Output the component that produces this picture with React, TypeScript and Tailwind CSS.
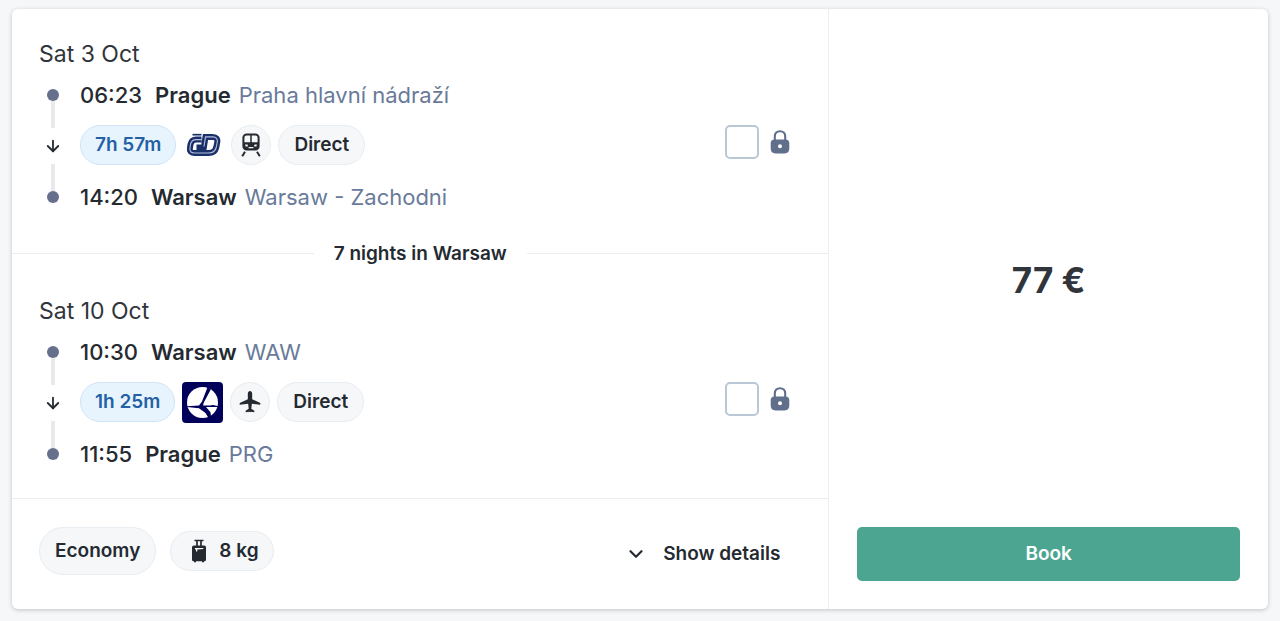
import React from 'react';
import { ArrowDown, ChevronDown } from 'lucide-react';

interface Stop {
  time: string;
  city: string;
  station: string;
}

interface Trip {
  id: string;
  date: string;
  from: Stop;
  to: Stop;
  duration: string;
  carrier: 'cd' | 'lot';
  transport: 'train' | 'plane';
}

const trips: Trip[] = [
  {
    id: 'outbound',
    date: 'Sat 3 Oct',
    from: { time: '06:23', city: 'Prague', station: 'Praha hlavní nádraží' },
    to: { time: '14:20', city: 'Warsaw', station: 'Warsaw - Zachodni' },
    duration: '7h 57m',
    carrier: 'cd',
    transport: 'train',
  },
  {
    id: 'inbound',
    date: 'Sat 10 Oct',
    from: { time: '10:30', city: 'Warsaw', station: 'WAW' },
    to: { time: '11:55', city: 'Prague', station: 'PRG' },
    duration: '1h 25m',
    carrier: 'lot',
    transport: 'plane',
  },
];

function CdLogo() {
  return (
    <svg width="41" height="26" viewBox="0 0 41 26" fill="none" aria-hidden="true">
      <path d="M9.5 2.7H18.5" stroke="#1b3068" strokeWidth="1.7" />
      <path
        d="M18.5 7.6H13C10 7.6 8.4 9 7.6 12L7 15.5C6.3 19.3 8 21 11.3 21H25.5C30 21 32.3 19.3 33.2 15.5L34.2 10.5C35 6.8 33.2 4.9 29.8 4.9H22.5L20.8 15.4H13.5"
        stroke="#1b3068"
        strokeWidth="6"
      />
      <path
        d="M18.5 7.6H13C10 7.6 8.4 9 7.6 12L7 15.5C6.3 19.3 8 21 11.3 21H25.5C30 21 32.3 19.3 33.2 15.5L34.2 10.5C35 6.8 33.2 4.9 29.8 4.9H22.5L21 14.5"
        stroke="#b4bfdc"
        strokeWidth="1.1"
      />
    </svg>
  );
}

function LotLogo() {
  return (
    <svg width="41" height="41" viewBox="0 0 41 41" fill="none" aria-hidden="true">
      <rect width="41" height="41" rx="4" fill="#00005b" />
      <circle cx="20.5" cy="20.5" r="15.5" fill="#fff" />
      <path d="M25.6 5L28.8 7.5L21.8 20.5L21 23.4L28 23.6L31 23L36.5 24.2V25H24L28.5 30.2L29 34.5L26.5 36L23.5 31L17 26.2L5 25V24.2L17 23.4L20 19.5Z" fill="#00005b" />
    </svg>
  );
}

function TrainIcon() {
  return (
    <svg width="20" height="24" viewBox="0 0 20 24" fill="none" aria-hidden="true">
      <rect x="2.4" y="1.4" width="15.2" height="15.2" rx="3.2" stroke="#252a31" strokeWidth="2" />
      <path d="M10 1.5V10" stroke="#252a31" strokeWidth="1.5" />
      <path
        fillRule="evenodd"
        d="M3 9.3H17V14.5C17 16 16 16.8 14.5 16.8H5.5C4 16.8 3 16 3 14.5ZM4.4 11.3V13.4H6.8V11.8ZM15.6 11.3V13.4H13.2V11.8ZM7.6 14V15.4H12.4V14Z"
        fill="#252a31"
      />
      <path d="M4 18.8L1.2 23.2M16 18.8L18.8 23.2" stroke="#252a31" strokeWidth="2" />
    </svg>
  );
}

function PlaneIcon() {
  return (
    <svg width="26" height="26" viewBox="0 0 24 24" fill="#252a31" aria-hidden="true">
      <path d="M21.5 14.6v-1.7L14 9.4V4c0-1.2-1-2.2-2-2.2S10 2.8 10 4v5.4l-7.5 3.5v1.7l7.8-1.1.5 4.8L8 20v1.5l3.5-.6.5.9.5-.9 3.5.6V20l-2.8-1.7.5-4.8z" />
    </svg>
  );
}

function LockIcon() {
  return (
    <svg width="20" height="24" viewBox="0 0 20 24" fill="none" aria-hidden="true">
      <path d="M4.8 11V6.4C4.8 3.2 7 1.2 10 1.2S15.2 3.2 15.2 6.4V11" stroke="#5f6f8c" strokeWidth="2.1" />
      <path
        fillRule="evenodd"
        d="M4.5 9.5H15.5C18 9.5 19.3 10.9 19.3 13.2V18.6C19.3 21.8 17.6 23.5 14.6 23.5H5.4C2.4 23.5 .7 21.8 .7 18.6V13.2C.7 10.9 2 9.5 4.5 9.5ZM10 14.3A2 2 0 1 0 10 18.3A2 2 0 1 0 10 14.3Z"
        fill="#5f6f8c"
      />
    </svg>
  );
}

function LuggageIcon() {
  return (
    <svg width="16" height="24" viewBox="0 0 16 24" fill="none" aria-hidden="true">
      <path d="M3.5 1.5H12.5M6 2V7M10 2V7" stroke="#252a31" strokeWidth="1.7" />
      <path
        fillRule="evenodd"
        d="M3 6.5H13C14.4 6.5 15 7.2 15 8.6V20.4C15 21.6 14.3 22.3 13 22.3V23.3H11V22.3H5V23.3H3V22.3C1.7 22.3 1 21.6 1 20.4V8.6C1 7.2 1.6 6.5 3 6.5ZM4 9V10.4H5V12.4H6.3V10.4L12.4 9.9V9Z"
        fill="#252a31"
      />
    </svg>
  );
}

function StopRow({ stop }: { stop: Stop }) {
  return (
    <div className="flex h-8 items-center whitespace-nowrap text-[22px] leading-8">
      <span className="mr-[13px] font-medium text-[#252a31]">{stop.time}</span>
      <span className="mr-2 font-semibold text-[#252a31]">{stop.city}</span>
      <span className="text-[#697a9a]">{stop.station}</span>
    </div>
  );
}

function Timeline() {
  return (
    <div className="flex w-7 flex-col items-center py-2.5">
      <span className="size-3 rounded-full bg-[#66708c]" />
      <span className="w-1 flex-1 bg-[#e8e9eb]" />
      <span className="flex h-9 items-center text-[#252a31]">
        <ArrowDown size={18} strokeWidth={2.4} />
      </span>
      <span className="w-1 flex-1 bg-[#e8e9eb]" />
      <span className="size-3 rounded-full bg-[#66708c]" />
    </div>
  );
}

const pill = 'flex h-10 items-center rounded-full border border-[#e8edf1] bg-[#f5f7f9] text-[#252a31]';

function TripSegment({ trip }: { trip: Trip }) {
  return (
    <section className="px-[27px] pt-[29px] pb-7">
      <h2 className="h-8 text-[23px] leading-8 text-[#30353b]">{trip.date}</h2>
      <div className="mt-[9px] flex items-center justify-between">
        <div className="flex gap-[13px]">
          <Timeline />
          <div>
            <StopRow stop={trip.from} />
            <div className="mt-3.5 mb-4 flex h-10 items-center gap-[7px] text-[19px] font-semibold">
              <span className="flex h-10 items-center rounded-full border border-[#cfe4f7] bg-[#e8f4fd] px-3.5 text-[#2360a5]">
                {trip.duration}
              </span>
              {trip.carrier === 'cd' ? <CdLogo /> : <LotLogo />}
              <span className={`${pill} w-10 justify-center`}>
                {trip.transport === 'train' ? <TrainIcon /> : <PlaneIcon />}
              </span>
              <span className={`${pill} px-[15px]`}>Direct</span>
            </div>
            <StopRow stop={trip.to} />
          </div>
        </div>
        <label className="mr-[11px] mb-2 flex items-center gap-[11px]">
          <input
            type="checkbox"
            aria-label={`Lock ${trip.date}`}
            className="size-[34px] appearance-none rounded-[5px] border-2 border-[#bac7d5] bg-white"
          />
          <LockIcon />
        </label>
      </div>
    </section>
  );
}

export default function App() {
  return (
    <main className="min-h-screen bg-[#f5f7f9] px-3 pt-[9px] pb-3 font-[Inter,sans-serif]">
      <article className="flex rounded-md bg-white shadow-[0_1px_4px_rgba(37,42,49,0.25)]">
        <div className="w-[65%]">
          <TripSegment trip={trips[0]} />
          <div className="flex h-[25px] items-center gap-5">
            <span className="h-px flex-1 bg-[#e8edf1]" />
            <span className="text-[19px] leading-6 font-semibold text-[#252a31]">7 nights in Warsaw</span>
            <span className="h-px flex-1 bg-[#e8edf1]" />
          </div>
          <TripSegment trip={trips[1]} />
          <footer className="flex items-center justify-between border-t border-[#e8edf1] px-[27px] py-7">
            <div className="flex h-[54px] items-start gap-3.5 text-[19px] font-semibold">
              <span className="flex h-12 items-center rounded-full border border-[#e8edf1] bg-[#f5f7f9] px-[15px] text-[#252a31]">
                Economy
              </span>
              <span className={`${pill} mt-1 gap-3 pr-3.5 pl-5`}>
                <LuggageIcon />
                8 kg
              </span>
            </div>
            <button type="button" className="mr-[21px] flex items-center gap-4 text-[19px] font-semibold text-[#252a31]">
              <ChevronDown size={22} strokeWidth={2.4} />
              Show details
            </button>
          </footer>
        </div>
        <aside className="flex w-[35%] flex-col border-l border-[#eceff2] px-7 pb-7">
          <p className="flex flex-1 items-center justify-center pt-6 text-[35px] font-bold text-[#30353b]">77 €</p>
          <button type="button" className="h-[54px] rounded-[5px] bg-[#4ba591] text-[19px] font-semibold text-white">
            Book
          </button>
        </aside>
      </article>
    </main>
  );
}
